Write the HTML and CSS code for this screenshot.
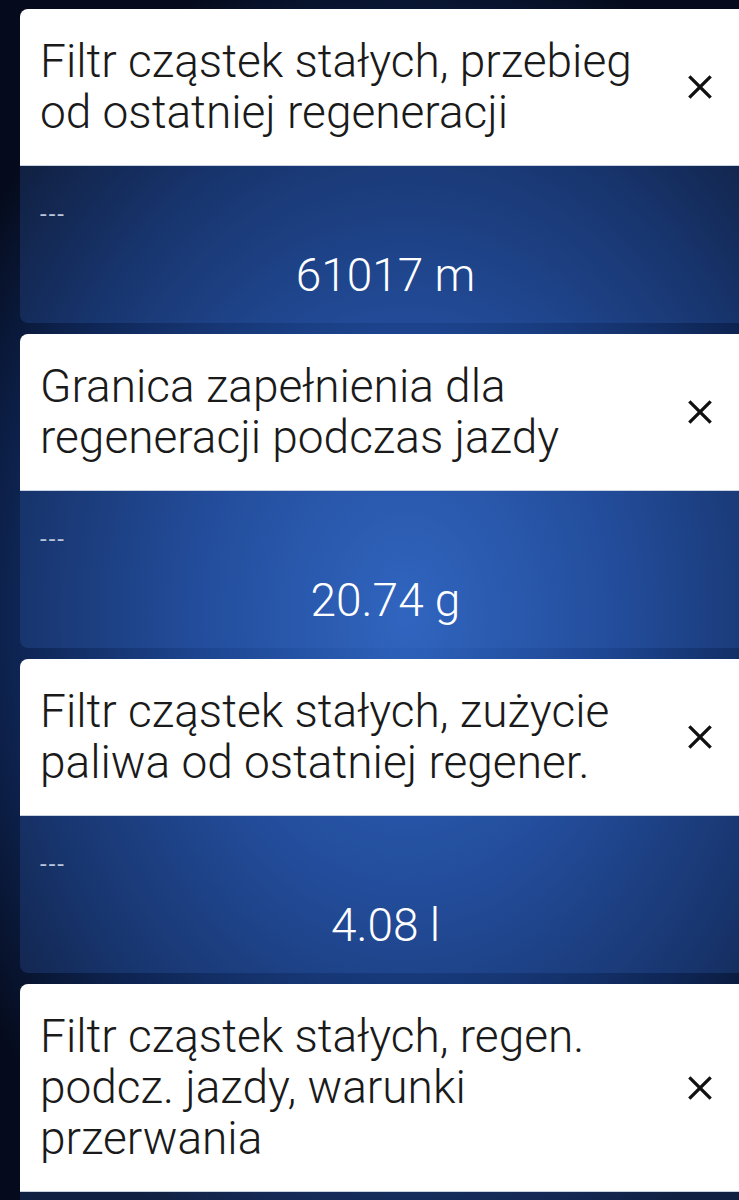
FILE: index.html
```html
<!DOCTYPE html>
<html lang="pl">

<head>
    <meta charset="UTF-8">
    <meta name="viewport" content="width=device-width, initial-scale=1.0">
    <title>Filtr cząstek stałych</title>
    <link rel="stylesheet" href="styles.css">
</head>

<body>
    <!-- Lista wartości -->
    <div id="value-list">
        <div class="value-card">
            <div class="card-head">
                <div class="card-title">Filtr cząstek stałych, przebieg od ostatniej regeneracji</div>
                <button class="close-btn" aria-label="Usuń">
                    <svg viewBox="0 0 24 24" width="32" height="32"><path d="M4 4L20 20M20 4L4 20" /></svg>
                </button>
            </div>
            <div class="card-body">
                <div class="card-note">---</div>
                <div class="card-value">61017 m</div>
            </div>
        </div>

        <div class="value-card">
            <div class="card-head">
                <div class="card-title">Granica zapełnienia dla regeneracji podczas jazdy</div>
                <button class="close-btn" aria-label="Usuń">
                    <svg viewBox="0 0 24 24" width="32" height="32"><path d="M4 4L20 20M20 4L4 20" /></svg>
                </button>
            </div>
            <div class="card-body">
                <div class="card-note">---</div>
                <div class="card-value">20.74 g</div>
            </div>
        </div>

        <div class="value-card">
            <div class="card-head">
                <div class="card-title">Filtr cząstek stałych, zużycie paliwa od ostatniej regener.</div>
                <button class="close-btn" aria-label="Usuń">
                    <svg viewBox="0 0 24 24" width="32" height="32"><path d="M4 4L20 20M20 4L4 20" /></svg>
                </button>
            </div>
            <div class="card-body">
                <div class="card-note">---</div>
                <div class="card-value">4.08 l</div>
            </div>
        </div>

        <div class="value-card">
            <div class="card-head">
                <div class="card-title">Filtr cząstek stałych, regen. podcz. jazdy, warunki przerwania</div>
                <button class="close-btn" aria-label="Usuń">
                    <svg viewBox="0 0 24 24" width="32" height="32"><path d="M4 4L20 20M20 4L4 20" /></svg>
                </button>
            </div>
            <div class="card-body card-body-empty"></div>
        </div>
    </div>
</body>

</html>
```

FILE: styles.css
```css
/* Reset */
* {
    margin: 0;
    padding: 0;
    box-sizing: border-box;
    font-family: 'Roboto', 'Noto Sans', sans-serif;
}

body {
    min-height: 100vh;
    overflow: hidden;
    background-color: #07112a;
    background-image: radial-gradient(ellipse 70% 55% at 55% 50%, #2e63bd 0%, #1d4590 40%, #0e2554 75%, #050b1c 100%);
}

/* List */
#value-list {
    display: flex;
    flex-direction: column;
    gap: 11px;
    padding: 9px 0 0 20px;
    margin-right: -12px;
}

.value-card {
    border-radius: 8px;
    overflow: hidden;
}

/* Card header */
.card-head {
    display: flex;
    align-items: center;
    gap: 20px;
    padding: 27px 35px 27px 20px;
    background-color: #fff;
    border-bottom: 1px solid #c9d2e0;
}

.card-title {
    flex-grow: 1;
    color: #1a1a1a;
    font-size: 46px;
    font-weight: 300;
    line-height: 51px;
}

.close-btn {
    border: none;
    background: none;
    width: 32px;
    height: 32px;
    cursor: pointer;
}

.close-btn path {
    stroke: #111;
    stroke-width: 2.5;
    fill: none;
}

/* Card body */
.card-body {
    height: 157px;
    padding: 34px 20px 0;
    background-color: rgba(60, 110, 200, 0.22);
    color: #fff;
}

.card-body-empty {
    height: 40px;
}

.card-note {
    font-size: 24px;
    line-height: 28px;
    letter-spacing: 2px;
    color: #b9c5da;
}

.card-value {
    margin-top: 20px;
    text-align: center;
    font-size: 46px;
    font-weight: 300;
    line-height: 54px;
}
```
